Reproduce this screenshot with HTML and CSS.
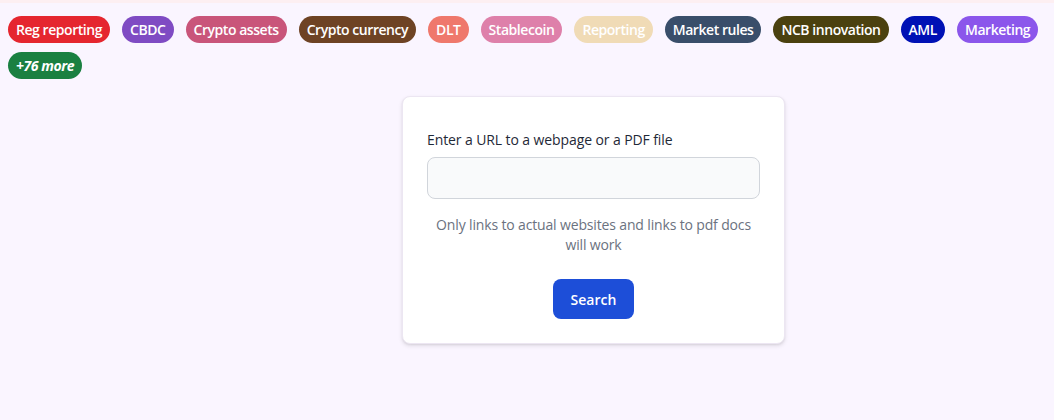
FILE: index.html
```html
<!DOCTYPE html>
<html lang="en">
<head>
<meta charset="utf-8">
<title>Search</title>
<link rel="stylesheet" href="styles.css">
</head>
<body>
<div class="topbar"></div>
<div class="tags">
  <span class="tag t-red">Reg reporting</span>
  <span class="tag t-purple">CBDC</span>
  <span class="tag t-rose">Crypto assets</span>
  <span class="tag t-brown">Crypto currency</span>
  <span class="tag t-salmon">DLT</span>
  <span class="tag t-pink">Stablecoin</span>
  <span class="tag t-sand">Reporting</span>
  <span class="tag t-slate">Market rules</span>
  <span class="tag t-olive">NCB innovation</span>
  <span class="tag t-navy">AML</span>
  <span class="tag t-violet">Marketing</span>
  <span class="tag t-green more">+76 more</span>
</div>
<main class="main">
  <form class="card">
    <label class="label" for="url">Enter a URL to a webpage or a PDF file</label>
    <input class="input" id="url" type="text">
    <p class="help">Only links to actual websites and links to pdf docs will work</p>
    <button class="btn" type="button">Search</button>
  </form>
</main>
</body>
</html>
```
FILE: styles.css
```css
* { box-sizing: border-box; }
html, body { margin: 0; padding: 0; }
body {
  background: #faf5ff;
  font-family: "Open Sans", "Noto Sans", sans-serif;
  font-size: 14px;
  color: #1f2937;
  height: 420px;
}
.topbar {
  height: 3px;
  background: #fdeff2;
}
.tags {
  display: flex;
  flex-wrap: wrap;
  gap: 9px 12px;
  padding: 13px 8px 0;
}
.tag {
  display: inline-block;
  padding: 4px 8px;
  border-radius: 999px;
  color: #fff;
  font-weight: 600;
  line-height: 19px;
  font-size: 14px;
  letter-spacing: -0.45px;
}
.more { font-style: italic; font-weight: 700; }
.t-red { background: #e5262f; }
.t-purple { background: #7f4bc3; }
.t-rose { background: #c9557a; }
.t-brown { background: #6e4324; }
.t-salmon { background: #ef786c; }
.t-pink { background: #de80aa; }
.t-sand { background: #f0dbb6; }
.t-slate { background: #394e6a; }
.t-olive { background: #4b410f; }
.t-navy { background: #0011b5; }
.t-violet { background: #8b56eb; }
.t-green { background: #1a8041; }
.main {
  display: flex;
  justify-content: center;
  padding-top: 17px;
  padding-left: 133px;
}
.card {
  width: 383px;
  background: #fff;
  border: 1px solid #ece6f2;
  border-radius: 8px;
  box-shadow: 0 2px 4px rgba(0,0,0,0.1), 0 1px 2px rgba(0,0,0,0.06);
  padding: 33px 24px 24px;
  display: flex;
  flex-direction: column;
  margin: 0;
}
.label {
  display: block;
  line-height: 20px;
  color: #1f2937;
  margin-bottom: 7px;
  letter-spacing: -0.1px;
}
.input {
  width: 100%;
  height: 42px;
  background: #f9fafb;
  border: 1px solid #d1d5db;
  border-radius: 8px;
  font: inherit;
}
.help {
  margin: 16px 0 0;
  text-align: center;
  color: #6b7280;
  line-height: 20px;
  letter-spacing: -0.15px;
}
.btn {
  align-self: center;
  margin-top: 24px;
  width: 81px;
  height: 40px;
  border: none;
  border-radius: 8px;
  background: #1d4ed8;
  color: #fff;
  font: inherit;
  font-weight: 600;
}
```
